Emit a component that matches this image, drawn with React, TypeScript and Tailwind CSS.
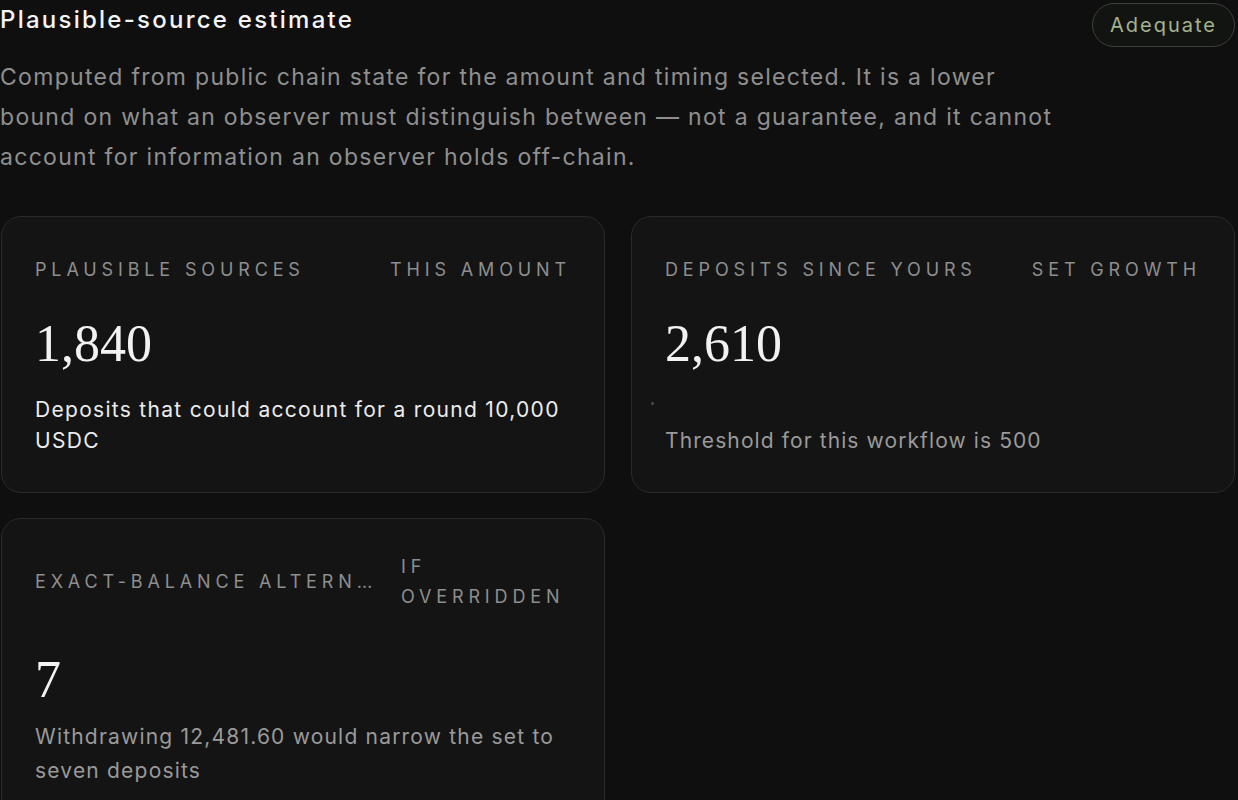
import React from "react";

const sans = { fontFamily: "Inter, 'Noto Sans', sans-serif" };
const serif = { fontFamily: "'Liberation Serif', serif" };

function Label({ children, className = "" }: { children: React.ReactNode; className?: string }) {
  return (
    <div className={`text-[18px] leading-[30px] tracking-[0.27em] uppercase text-[#8e8e8e] ${className}`}>
      {children}
    </div>
  );
}

export default function App() {
  return (
    <div className="min-h-screen w-full bg-[#0f0f0f] text-white overflow-hidden" style={sans}>
      <div className="pr-[3px]">
        <div className="flex items-start justify-between">
          <h2 className="text-[24px] leading-[40px] font-medium text-[#f4f4f4] tracking-[2.25px]">
            Plausible-source estimate
          </h2>
          <span className="mt-[3px] inline-flex h-[44px] items-center rounded-full border border-[#3b4036] bg-[#121411] px-[17px] text-[20px] tracking-[0.1em] text-[#a5b38e]">
            Adequate
          </span>
        </div>
        <p className="mt-[10px] max-w-[1062px] text-[23px] leading-[40px] tracking-[1.3px] text-[#8f8f8f]">
          Computed from public chain state for the amount and timing selected. It is a lower bound on what an
          observer must distinguish between — not a guarantee, and it cannot account for information an observer
          holds off-chain.
        </p>

        <div className="mt-[39px] grid grid-cols-2 gap-x-[26px] gap-y-[25px] pl-[1px]">
          {/* Card 1 */}
          <div className="flex h-[277px] flex-col rounded-[20px] border border-[#2a2a2a] bg-[#141414] px-[33px] pt-[34px] pb-[36px]">
            <div className="flex min-h-[38px] items-center justify-between gap-[22px]">
              <Label className="min-w-0 truncate">Plausible sources</Label>
              <Label className="min-w-0">This amount</Label>
            </div>
            <div className="mt-[27px] text-[52px] leading-[56px] text-[#f2f2f2]" style={serif}>
              1,840
            </div>
            <p className="mt-auto text-[21px] leading-[31px] tracking-[1.3px] text-[#ececec]">
              Deposits that could account for a round 10,000 USDC
            </p>
          </div>

          {/* Card 2 */}
          <div className="flex h-[277px] flex-col rounded-[20px] border border-[#2a2a2a] bg-[#141414] px-[33px] pt-[34px] pb-[36px]">
            <div className="flex min-h-[38px] items-center justify-between gap-[22px]">
              <Label className="min-w-0 truncate">Deposits since yours</Label>
              <Label className="min-w-0">Set growth</Label>
            </div>
            <div className="mt-[27px] text-[52px] leading-[56px] text-[#f2f2f2]" style={serif}>
              2,610
            </div>
            <div className="mt-[30px] ml-[-14px] h-[3px] w-[3px] rounded-full bg-[#4a4a4a]" />
            <p className="mt-auto text-[21px] leading-[31px] tracking-[1.1px] text-[#9a9a9a]">
              Threshold for this workflow is 500
            </p>
          </div>

          {/* Card 3 */}
          <div className="flex flex-col rounded-[20px] border border-[#2a2a2a] bg-[#141414] px-[33px] pt-[33px] pb-[36px]">
            <div className="flex min-h-[38px] items-center justify-between gap-[22px]">
              <Label className="min-w-0 truncate">Exact-balance alternative</Label>
              <Label className="w-[170px] shrink-0">If overridden</Label>
            </div>
            <div className="mt-[40px] text-[52px] leading-[56px] text-[#f2f2f2]" style={serif}>
              7
            </div>
            <p className="mt-[12px] text-[21px] leading-[34px] tracking-[1.2px] text-[#9a9a9a]">
              Withdrawing 12,481.60 would narrow the set to seven deposits
            </p>
            <div className="h-[20px]" />
          </div>
        </div>
      </div>
    </div>
  );
}
